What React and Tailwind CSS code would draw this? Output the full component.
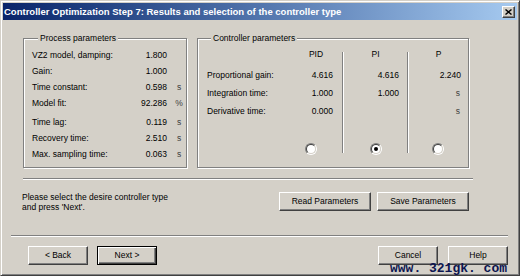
const font = { fontFamily: '"Liberation Sans", Arial, sans-serif' };

const btn =
  'h-[19px] bg-[#d4d0c8] text-[8.5px] text-black border border-t-white border-l-white border-r-[#404040] border-b-[#404040] shadow-[inset_-1px_-1px_0_#808080] flex items-center justify-center';

function Radio({ checked }) {
  return (
    <div className="w-[12px] h-[12px] rounded-full border border-t-[#808080] border-l-[#808080] border-r-white border-b-white">
      <div className="w-full h-full rounded-full bg-white border border-t-[#404040] border-l-[#404040] border-r-[#d4d0c8] border-b-[#d4d0c8] flex items-center justify-center">
        {checked && <div className="w-[4px] h-[4px] rounded-full bg-black" />}
      </div>
    </div>
  );
}

function VSep() {
  return <div className="mt-[6px] h-[101px] w-[2px] border-l border-l-[#808080] border-r border-r-white" />;
}

const processRows = [
  ['VZ2 model, damping:', '1.800', ''],
  ['Gain:', '1.000', ''],
  ['Time constant:', '0.598', 's'],
  ['Model fit:', '92.286', '%'],
  ['Time lag:', '0.119', 's'],
  ['Recovery time:', '2.510', 's'],
  ['Max. sampling time:', '0.063', 's'],
];

export default function App() {
  return (
    <div
      style={font}
      className="w-[520px] h-[276px] bg-[#d4d0c8] relative flex flex-col border border-t-[#d4d0c8] border-l-[#d4d0c8] border-r-[#404040] border-b-[#404040] shadow-[inset_1px_1px_0_#fff,inset_-1px_-1px_0_#808080] p-[2px] overflow-hidden"
    >
      {/* title bar */}
      <div className="h-[17px] flex items-center justify-between pl-[1px] pr-[2px] bg-gradient-to-r from-[#0a246a] to-[#a6caf0]">
        <span className="text-white font-bold text-[9.5px] leading-none whitespace-nowrap">
          Controller Optimization Step 7: Results and selection of the controller type
        </span>
        <div className="w-[13px] h-[12px] bg-[#d4d0c8] border border-t-white border-l-white border-r-[#404040] border-b-[#404040] shadow-[inset_-1px_-1px_0_#808080] flex items-center justify-center">
          <svg width="7" height="6" viewBox="0 0 7 6">
            <path d="M0.5 0.5 L6.5 5.5 M6.5 0.5 L0.5 5.5" stroke="#000" strokeWidth="1.4" />
          </svg>
        </div>
      </div>

      {/* group boxes */}
      <div className="flex gap-[10px] ml-[20px] mt-[13px]">
        <fieldset className="w-[164px] h-[135px] border border-[#808080] shadow-[1px_1px_0_#fff,inset_1px_1px_0_#fff] pt-[3px] pl-[8px] text-[8.5px] text-black">
          <legend className="ml-[6px] px-[2px] leading-[11px] bg-[#d4d0c8] text-[8.5px]">Process parameters</legend>
          {processRows.map(([label, value, unit], i) => (
            <div key={label} className={`flex items-center h-[16px] ${i === 4 ? 'mt-[3px]' : ''}`}>
              <span className="flex-1">{label}</span>
              <span className="text-right">{value}</span>
              <span className="w-[14px] ml-[5px] text-center text-[#404040]">{unit}</span>
            </div>
          ))}
        </fieldset>

        <fieldset className="w-[272px] h-[135px] border border-[#808080] shadow-[1px_1px_0_#fff,inset_1px_1px_0_#fff] pt-[2px] pl-[9px] text-[8.5px] text-black">
          <legend className="ml-[4px] px-[2px] leading-[11px] bg-[#d4d0c8] text-[8.5px]">Controller parameters</legend>
          <div className="flex">
            <div className="w-[83px] flex flex-col">
              <div className="h-[16px]" />
              <div className="mt-[4px] h-[18px] flex items-center">Proportional gain:</div>
              <div className="h-[18px] flex items-center">Integration time:</div>
              <div className="h-[18px] flex items-center">Derivative time:</div>
            </div>

            <div className="w-[52px] flex flex-col">
              <div className="h-[16px] flex items-center justify-center">PID</div>
              <div className="mt-[4px] h-[18px] flex items-center justify-end pr-[9px]">4.616</div>
              <div className="h-[18px] flex items-center justify-end pr-[9px]">1.000</div>
              <div className="h-[18px] flex items-center justify-end pr-[9px]">0.000</div>
              <div className="mt-[23px] flex justify-center pr-[10px]"><Radio /></div>
            </div>

            <VSep />

            <div className="w-[63px] flex flex-col">
              <div className="h-[16px] flex items-center justify-center">PI</div>
              <div className="mt-[4px] h-[18px] flex items-center justify-end pr-[8px]">4.616</div>
              <div className="h-[18px] flex items-center justify-end pr-[8px]">1.000</div>
              <div className="h-[18px]" />
              <div className="mt-[23px] flex justify-center"><Radio checked /></div>
            </div>

            <VSep />

            <div className="w-[59px] flex flex-col">
              <div className="h-[16px] flex items-center justify-center">P</div>
              <div className="mt-[4px] h-[18px] flex items-center justify-end pr-[7px]">2.240</div>
              <div className="h-[18px] flex items-center justify-end pr-[8px] text-[#404040]">s</div>
              <div className="h-[18px] flex items-center justify-end pr-[8px] text-[#404040]">s</div>
              <div className="mt-[23px] flex justify-center pr-[2px]"><Radio /></div>
            </div>
          </div>
        </fieldset>
      </div>

      {/* etched separator */}
      <div className="mt-[10px] ml-[20px] w-[450px] h-[2px] border-t border-t-[#808080] border-b border-b-white" />

      <div className="mt-[12px] ml-[19px] mr-[48px] flex items-start">
        <p className="text-[8.5px] leading-[10px] text-black">
          Please select the desire controller type
          <br />
          and press 'Next'.
        </p>
        <div className="ml-auto flex gap-[6px]">
          <button className={`${btn} w-[92px]`}>Read Parameters</button>
          <button className={`${btn} w-[92px]`}>Save Parameters</button>
        </div>
      </div>

      <div className="mt-[23px] ml-[8px] mr-[9px] h-[2px] border-t border-t-[#808080] border-b border-b-white" />

      <div className="mt-[9px] ml-[25px] mr-[9px] flex">
        <button className={`${btn} w-[60px]`}>&lt; Back</button>
        <button className="ml-[9px] w-[60px] h-[19px] bg-[#d4d0c8] text-[8.5px] text-black border border-black shadow-[inset_1px_1px_0_#fff,inset_-1px_-1px_0_#404040,inset_-2px_-2px_0_#808080] flex items-center justify-center">
          Next &gt;
        </button>
        <button className={`${btn} w-[60px] ml-auto`}>Cancel</button>
        <button className={`${btn} w-[60px] ml-[10px]`}>Help</button>
      </div>

      <span
        style={{ fontFamily: '"Liberation Mono", "DejaVu Sans Mono", monospace' }}
        className="absolute left-[389px] top-[262px] text-[13px] leading-[12px] font-bold text-[#0c1550] whitespace-nowrap"
      >
        www. 321gk. com
      </span>
    </div>
  );
}
